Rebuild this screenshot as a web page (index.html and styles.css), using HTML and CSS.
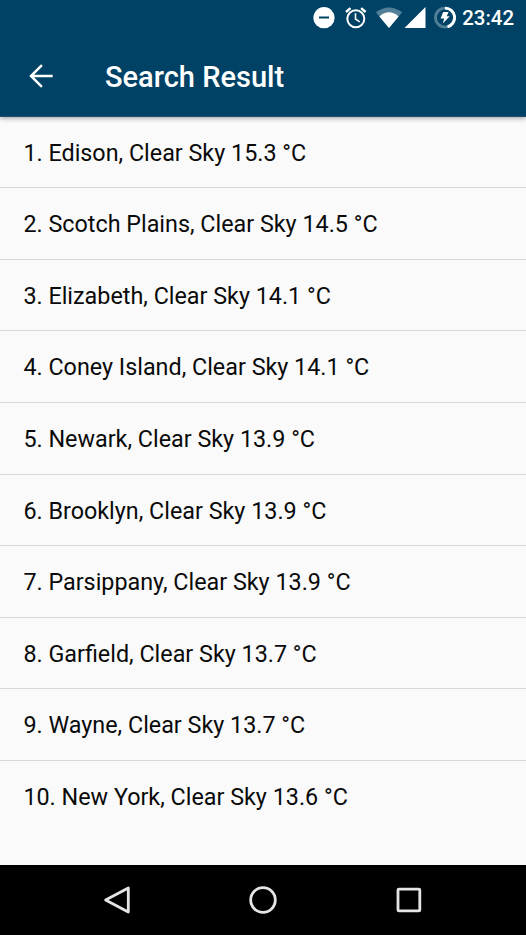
FILE: index.html
```html
<!DOCTYPE html>
<html lang="en">
<head>
<meta charset="utf-8">
<title>Search Result</title>
<link rel="stylesheet" href="styles.css">
</head>
<body>
<div class="screen">
  <header class="header">
    <div class="status">
      <svg class="status-icons" width="152" height="36" viewBox="308 0 152 36" aria-hidden="true">
        <circle cx="324" cy="17.7" r="10.6" fill="#fff"/>
        <path d="M319 17.5h10" stroke="#004265" stroke-width="2"/>
        <g fill="none" stroke="#fff">
          <circle cx="355.8" cy="18.7" r="8.5" stroke-width="2"/>
          <path d="M346 12l4.5-3.8M365.600 12l-4.500-3.800" stroke-width="2.400"/>
          <path d="M355.500 13.300v5.700l4.200 2.800" stroke-width="1.600"/>
        </g>
        <path d="M375.800 12.300Q389 2.500 402.200 12.300L389 28z" fill="#507f97"/>
        <path d="M379.400 16.400Q389 8 398.600 16.400L389 28z" fill="#fff"/>
        <path d="M425.500 7v21h-21z" fill="#fff"/>
        <circle cx="445" cy="17.600" r="9.500" fill="none" stroke="#507f97" stroke-width="2.900"/>
        <path d="M445 8.100a9.500 9.500 0 0 1 2.500 18.700" fill="none" stroke="#fff" stroke-width="2.900"/>
        <path d="M443.200 12h5.400l-1.900 4.300h3l-6.900 7.100 1.400-4.900h-3.700z" fill="#fff"/>
      </svg>
      <span class="clock">23:42</span>
    </div>
    <div class="toolbar">
      <svg class="back" width="24" height="24" viewBox="0 0 24 24" aria-label="Back" fill="none" stroke="#fff" stroke-width="2.500">
        <path d="M23.700 12H2M12.900 1.200L2 12l10.900 10.800"/>
      </svg>
      <h1 class="title">Search Result</h1>
    </div>
  </header>
  <main class="content">
    <ul class="list">
      <li class="row">1. Edison, Clear Sky 15.3 °C</li>
      <li class="row">2. Scotch Plains, Clear Sky 14.5 °C</li>
      <li class="row">3. Elizabeth, Clear Sky 14.1 °C</li>
      <li class="row">4. Coney Island, Clear Sky 14.1 °C</li>
      <li class="row">5. Newark, Clear Sky 13.9 °C</li>
      <li class="row">6. Brooklyn, Clear Sky 13.9 °C</li>
      <li class="row">7. Parsippany, Clear Sky 13.9 °C</li>
      <li class="row">8. Garfield, Clear Sky 13.7 °C</li>
      <li class="row">9. Wayne, Clear Sky 13.7 °C</li>
      <li class="row">10. New York, Clear Sky 13.6 °C</li>
    </ul>
  </main>
  <nav class="navbar">
    <svg width="30" height="30" viewBox="0 0 30 30" aria-label="Back"><path d="M26.300 3v24L3.600 15z"/></svg>
    <svg width="30" height="30" viewBox="0 0 30 30" aria-label="Home"><circle cx="15" cy="15" r="12.300"/></svg>
    <svg width="30" height="30" viewBox="0 0 30 30" aria-label="Overview"><rect x="4" y="4.100" width="21.800" height="21.800" rx="1"/></svg>
  </nav>
</div>
</body>
</html>
```
FILE: styles.css
```css
* {
  box-sizing: border-box;
}

body {
  margin: 0;
  font-family: Roboto, sans-serif;
}

.screen {
  display: flex;
  flex-direction: column;
  width: 526px;
  height: 935px;
  overflow: hidden;
  background: #fafafa;
}

.header {
  flex: none;
  height: 117px;
  background: #004265;
  color: #fff;
  border-bottom: 1px solid #234c70;
  box-shadow: 0 1px 5px rgba(0, 0, 0, 0.4);
}

.status {
  display: flex;
  align-items: center;
  justify-content: flex-end;
  height: 36px;
  padding-right: 12px;
}

.status-icons {
  display: block;
  margin-right: 2px;
}

.clock {
  font-size: 20.4px;
  line-height: 36px;
  font-weight: 500;
}

.toolbar {
  display: flex;
  align-items: center;
  height: 80px;
  padding-left: 29px;
}

.back {
  margin-right: 52px;
}

.title {
  margin: 0;
  padding-top: 2px;
  font-size: 29px;
  line-height: 40px;
  font-weight: 500;
}

.content {
  flex: 1;
}

.list {
  margin: 0;
  padding: 0;
  list-style: none;
}

.row {
  height: 71.6px;
  padding-left: 23.4px;
  border-bottom: 1px solid #d8d8d8;
  font-size: 23.34px;
  line-height: 72.4px;
  color: #0a0a0a;
}

.row:first-child {
  height: 71.2px;
}

.row:last-child {
  border-bottom: 0;
}

.navbar {
  flex: none;
  display: flex;
  align-items: center;
  justify-content: center;
  gap: 116px;
  height: 70px;
  background: #000;
}

.navbar svg {
  fill: none;
  stroke: #e5e5e5;
  stroke-width: 2.800;
  stroke-linejoin: round;
}
```
